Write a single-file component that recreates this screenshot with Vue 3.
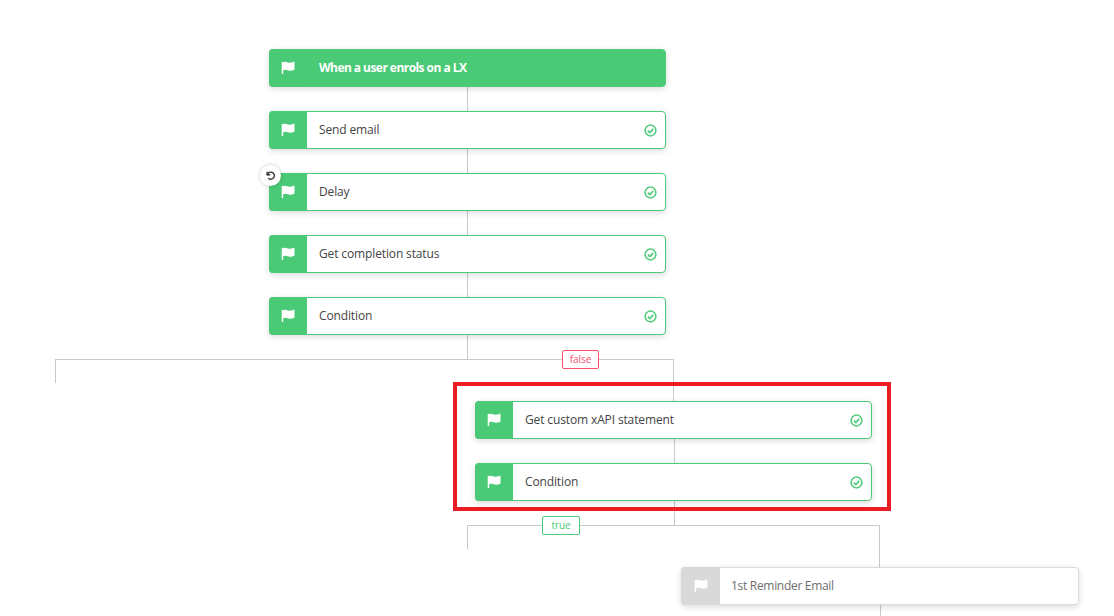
<script setup>
const lines = [
  { x: 467, y: 87, w: 1, h: 272 },
  { x: 55, y: 359, w: 618, h: 1 },
  { x: 55, y: 359, w: 1, h: 24 },
  { x: 673, y: 359, w: 1, h: 42 },
  { x: 674, y: 439, w: 1, h: 86 },
  { x: 467, y: 525, w: 413, h: 1 },
  { x: 467, y: 525, w: 1, h: 24 },
  { x: 879, y: 525, w: 1, h: 42 },
  { x: 880, y: 605, w: 1, h: 11 }
]
const nodes = [
  { x: 269, y: 49, label: 'When a user enrols on a LX', kind: 'head' },
  { x: 269, y: 111, label: 'Send email', kind: 'done' },
  { x: 269, y: 173, label: 'Delay', kind: 'done' },
  { x: 269, y: 235, label: 'Get completion status', kind: 'done' },
  { x: 269, y: 297, label: 'Condition', kind: 'done' },
  { x: 475, y: 401, label: 'Get custom xAPI statement', kind: 'done' },
  { x: 475, y: 463, label: 'Condition', kind: 'done' },
  { x: 681, y: 567, label: '1st Reminder Email', kind: 'idle' }
]
const place = (o) => ({ left: o.x + 'px', top: o.y + 'px', width: o.w ? o.w + 'px' : undefined, height: o.h ? o.h + 'px' : undefined })
</script>

<template>
  <div class="canvas">
    <div v-for="(l, i) in lines" :key="i" class="line" :style="place(l)"></div>

    <div v-for="n in nodes" :key="n.y" class="node" :class="n.kind" :style="place(n)">
      <div class="tab">
        <svg class="flag" width="14" height="13" viewBox="0 0 14 13">
          <path d="M0.700 1.200c0-.500.900-.600 1-.100v.300c1-.700 2.200-.800 3.500-.300 1.500.600 2.900 1 4.300.600.900-.300 2.200-.600 3.500-.900.300 0 .500.100.500.400v7.200c0 .200-.100.300-.300.400-1.500.600-3 1-4.300.900-1.500-.200-2.700-.900-4.200-1-1-.100-1.800.100-2.500.600v3.100c0 .700-1.500.700-1.500 0z" fill="#fff"/>
        </svg>
      </div>
      <span class="label">{{ n.label }}</span>
      <svg v-if="n.kind === 'done'" class="check" width="13" height="13" viewBox="0 0 13 13" fill="none" stroke="#4fcb7a">
        <circle cx="6.500" cy="6.500" r="5.400" stroke-width="1.500"/>
        <path d="M3.900 6.700l1.900 1.900 3.500-3.700" stroke-width="1.700"/>
      </svg>
    </div>

    <div class="undo">
      <svg width="9" height="9" viewBox="0 0 24 24" fill="none" stroke="#333" stroke-width="3.600" stroke-linecap="round" stroke-linejoin="round">
        <path d="M3 3v7h7"/>
        <path d="M3.500 10A9.500 9.500 0 1 1 7 20"/>
      </svg>
    </div>

    <span class="tag false">false</span>
    <span class="tag true">true</span>

    <div class="highlight"></div>
  </div>
</template>

<style scoped>
.canvas {
  position: relative;
  width: 1114px;
  height: 616px;
  overflow: hidden;
  background: #fff;
  font-family: "Open Sans", "Noto Sans", sans-serif;
}
.line {
  position: absolute;
  background: #c9c9c9;
}
.node {
  position: absolute;
  box-sizing: border-box;
  display: flex;
  align-items: center;
  width: 397px;
  height: 38px;
  background: #fff;
  border: 1px solid #4cca78;
  border-radius: 4px;
  box-shadow: 0 2px 6px rgba(0, 0, 0, 0.14);
}
.tab {
  display: flex;
  align-items: center;
  justify-content: center;
  flex: none;
  width: 38px;
  height: 38px;
  margin-left: -1px;
  background: #4aca76;
  border-radius: 4px 0 0 4px;
}
.flag {
  margin-top: -1px;
}
.label {
  margin-left: 12px;
  margin-top: -2px;
  font-size: 12px;
  font-weight: 500;
  letter-spacing: -0.13px;
  color: #444;
}
.check {
  margin-left: auto;
  margin-right: 8.500px;
}
.node.head {
  background: #4aca76;
}
.node.head .label {
  color: #fff;
  font-weight: 700;
  letter-spacing: -0.55px;
}
.node.idle {
  width: 398px;
  border-color: #dcdcdc;
}
.node.idle .tab {
  width: 39px;
  background: #d9d9d9;
}
.node.idle .label {
  margin-left: 11px;
  color: #6e6e6e;
  font-weight: 500;
  letter-spacing: -0.3px;
}
.undo {
  position: absolute;
  left: 260px;
  top: 165px;
  display: flex;
  align-items: center;
  justify-content: center;
  width: 21px;
  height: 21px;
  background: #fff;
  border-radius: 50%;
  box-shadow: 0 0 4px rgba(0, 0, 0, 0.2);
}
.tag {
  position: absolute;
  box-sizing: border-box;
  display: flex;
  align-items: center;
  justify-content: center;
  height: 19px;
  padding-bottom: 1px;
  background: #fff;
  border: 1px solid;
  border-radius: 2px;
  font-size: 10px;
  letter-spacing: -0.1px;
}
.tag.false {
  left: 562px;
  top: 350px;
  width: 37px;
  border-color: #f4506e;
  color: #f4506e;
}
.tag.true {
  left: 542px;
  top: 516px;
  width: 38px;
  border-color: #4cca78;
  color: #4cca78;
}
.highlight {
  position: absolute;
  box-sizing: border-box;
  left: 453px;
  top: 382px;
  width: 438px;
  height: 129px;
  border: 4px solid #ec1c24;
  pointer-events: none;
}
</style>
